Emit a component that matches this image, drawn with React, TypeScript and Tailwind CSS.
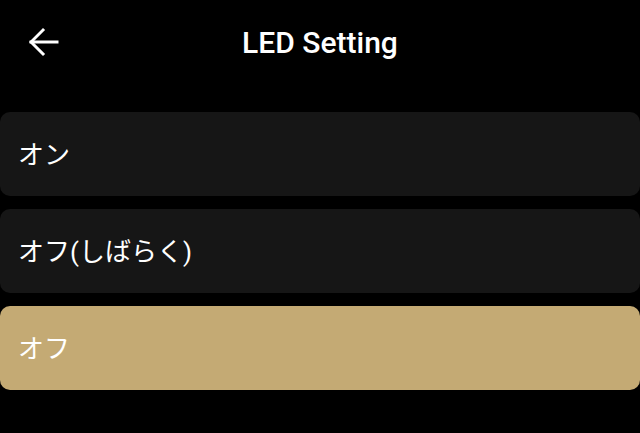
const options = ["オン", "オフ(しばらく)", "オフ"];

const BackArrow = () => (
  <svg width="30" height="30" viewBox="0 0 30 30" fill="none" stroke="white" strokeWidth="3" strokeLinecap="square">
    <path d="M2 15H28" />
    <path d="M14 3L2 15L14 27" />
  </svg>
);

export default function App() {
  const selected = 2;
  return (
    <div className="w-[640px] h-[433px] bg-black text-white overflow-hidden" style={{ fontFamily: "Roboto, 'Noto Sans CJK JP', sans-serif" }}>
      <div className="relative h-[84px] flex items-center justify-center">
        <button className="absolute left-[29px] top-[27px]">
          <BackArrow />
        </button>
        <h1 className="text-[30px] font-medium tracking-[0px]">LED Setting</h1>
      </div>
      <div className="mt-[28px] flex flex-col gap-[13.5px]">
        {options.map((label, i) => (
          <div
            key={label}
            className={`h-[83.5px] rounded-[10px] flex items-center px-[18px] pt-[3px] text-[26px] ${i === selected ? "bg-[#c4aa74]" : "bg-[#161616]"}`}
          >
            {label}
          </div>
        ))}
      </div>
    </div>
  );
}
